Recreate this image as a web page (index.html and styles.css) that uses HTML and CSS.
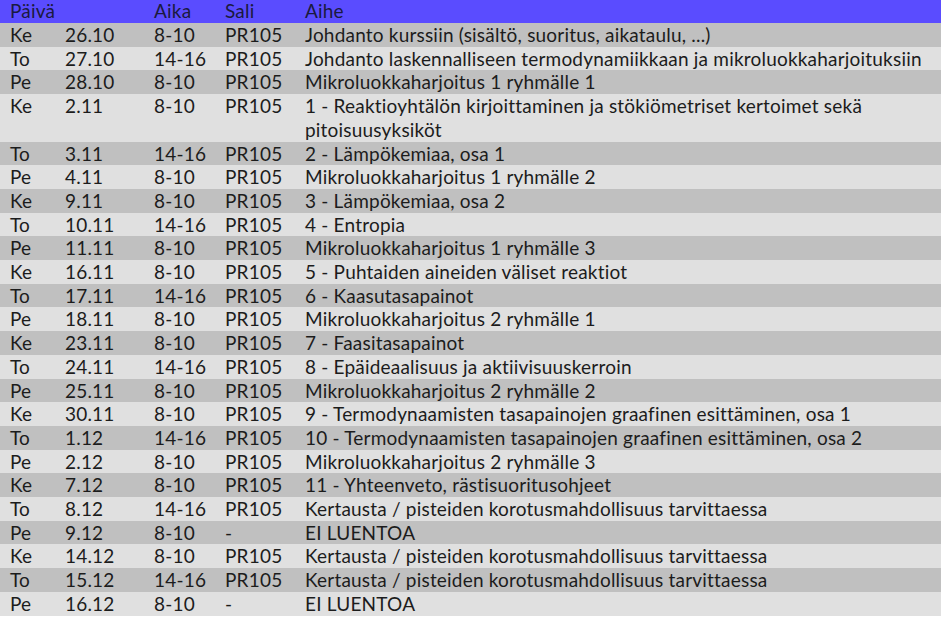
FILE: index.html
```html
<!DOCTYPE html>
<html lang="fi">
<head>
<meta charset="utf-8">
<title>Aikataulu</title>
<link rel="stylesheet" href="styles.css">
</head>
<body>
<table class="schedule">
  <colgroup>
    <col class="c-day"><col class="c-date"><col class="c-time"><col class="c-room"><col class="c-topic">
  </colgroup>
  <thead>
    <tr class="head"><th>Päivä</th><th></th><th>Aika</th><th>Sali</th><th>Aihe</th></tr>
  </thead>
  <tbody>
    <tr><td>Ke</td><td>26.10</td><td>8-10</td><td>PR105</td><td>Johdanto kurssiin (sisältö, suoritus, aikataulu, ...)</td></tr>
    <tr><td>To</td><td>27.10</td><td>14-16</td><td>PR105</td><td>Johdanto laskennalliseen termodynamiikkaan ja mikroluokkaharjoituksiin</td></tr>
    <tr><td>Pe</td><td>28.10</td><td>8-10</td><td>PR105</td><td>Mikroluokkaharjoitus 1 ryhmälle 1</td></tr>
    <tr><td>Ke</td><td>2.11</td><td>8-10</td><td>PR105</td><td>1 - Reaktioyhtälön kirjoittaminen ja stökiömetriset kertoimet sekä<br>pitoisuusyksiköt</td></tr>
    <tr><td>To</td><td>3.11</td><td>14-16</td><td>PR105</td><td>2 - Lämpökemiaa, osa 1</td></tr>
    <tr><td>Pe</td><td>4.11</td><td>8-10</td><td>PR105</td><td>Mikroluokkaharjoitus 1 ryhmälle 2</td></tr>
    <tr><td>Ke</td><td>9.11</td><td>8-10</td><td>PR105</td><td>3 - Lämpökemiaa, osa 2</td></tr>
    <tr><td>To</td><td>10.11</td><td>14-16</td><td>PR105</td><td>4 - Entropia</td></tr>
    <tr><td>Pe</td><td>11.11</td><td>8-10</td><td>PR105</td><td>Mikroluokkaharjoitus 1 ryhmälle 3</td></tr>
    <tr><td>Ke</td><td>16.11</td><td>8-10</td><td>PR105</td><td>5 - Puhtaiden aineiden väliset reaktiot</td></tr>
    <tr><td>To</td><td>17.11</td><td>14-16</td><td>PR105</td><td>6 - Kaasutasapainot</td></tr>
    <tr><td>Pe</td><td>18.11</td><td>8-10</td><td>PR105</td><td>Mikroluokkaharjoitus 2 ryhmälle 1</td></tr>
    <tr><td>Ke</td><td>23.11</td><td>8-10</td><td>PR105</td><td>7 - Faasitasapainot</td></tr>
    <tr><td>To</td><td>24.11</td><td>14-16</td><td>PR105</td><td>8 - Epäideaalisuus ja aktiivisuuskerroin</td></tr>
    <tr><td>Pe</td><td>25.11</td><td>8-10</td><td>PR105</td><td>Mikroluokkaharjoitus 2 ryhmälle 2</td></tr>
    <tr><td>Ke</td><td>30.11</td><td>8-10</td><td>PR105</td><td>9 - Termodynaamisten tasapainojen graafinen esittäminen, osa 1</td></tr>
    <tr><td>To</td><td>1.12</td><td>14-16</td><td>PR105</td><td>10 - Termodynaamisten tasapainojen graafinen esittäminen, osa 2</td></tr>
    <tr><td>Pe</td><td>2.12</td><td>8-10</td><td>PR105</td><td>Mikroluokkaharjoitus 2 ryhmälle 3</td></tr>
    <tr><td>Ke</td><td>7.12</td><td>8-10</td><td>PR105</td><td>11 - Yhteenveto, rästisuoritusohjeet</td></tr>
    <tr><td>To</td><td>8.12</td><td>14-16</td><td>PR105</td><td>Kertausta / pisteiden korotusmahdollisuus tarvittaessa</td></tr>
    <tr><td>Pe</td><td>9.12</td><td>8-10</td><td>-</td><td>EI LUENTOA</td></tr>
    <tr><td>Ke</td><td>14.12</td><td>8-10</td><td>PR105</td><td>Kertausta / pisteiden korotusmahdollisuus tarvittaessa</td></tr>
    <tr><td>To</td><td>15.12</td><td>14-16</td><td>PR105</td><td>Kertausta / pisteiden korotusmahdollisuus tarvittaessa</td></tr>
    <tr><td>Pe</td><td>16.12</td><td>8-10</td><td>-</td><td>EI LUENTOA</td></tr>
  </tbody>
</table>
</body>
</html>
```
FILE: styles.css
```css
html, body {
  margin: 0;
  padding: 0;
  background: #ffffff;
}
.schedule {
  width: 941px;
  border-collapse: collapse;
  table-layout: fixed;
  font-family: Lato, "Open Sans", sans-serif;
  font-size: 19px;
  letter-spacing: 0.2px;
  color: #1c1c1c;
}
.c-day { width: 65px; }
.c-date { width: 89px; }
.c-time { width: 71px; }
.c-room { width: 80px; }
.schedule th,
.schedule td {
  padding: 0;
  text-align: left;
  font-weight: normal;
  vertical-align: top;
  line-height: 23.7px;
  white-space: nowrap;
}
.schedule th:first-child,
.schedule td:first-child {
  padding-left: 10px;
}
.head {
  background: #5a4cff;
}
.head th {
  height: 23px;
  line-height: 22px;
  color: #1a1a40;
}
.schedule tbody tr:nth-child(odd) { background: #c0c0c0; }
.schedule tbody tr:nth-child(even) { background: #e0e0e0; }
```
